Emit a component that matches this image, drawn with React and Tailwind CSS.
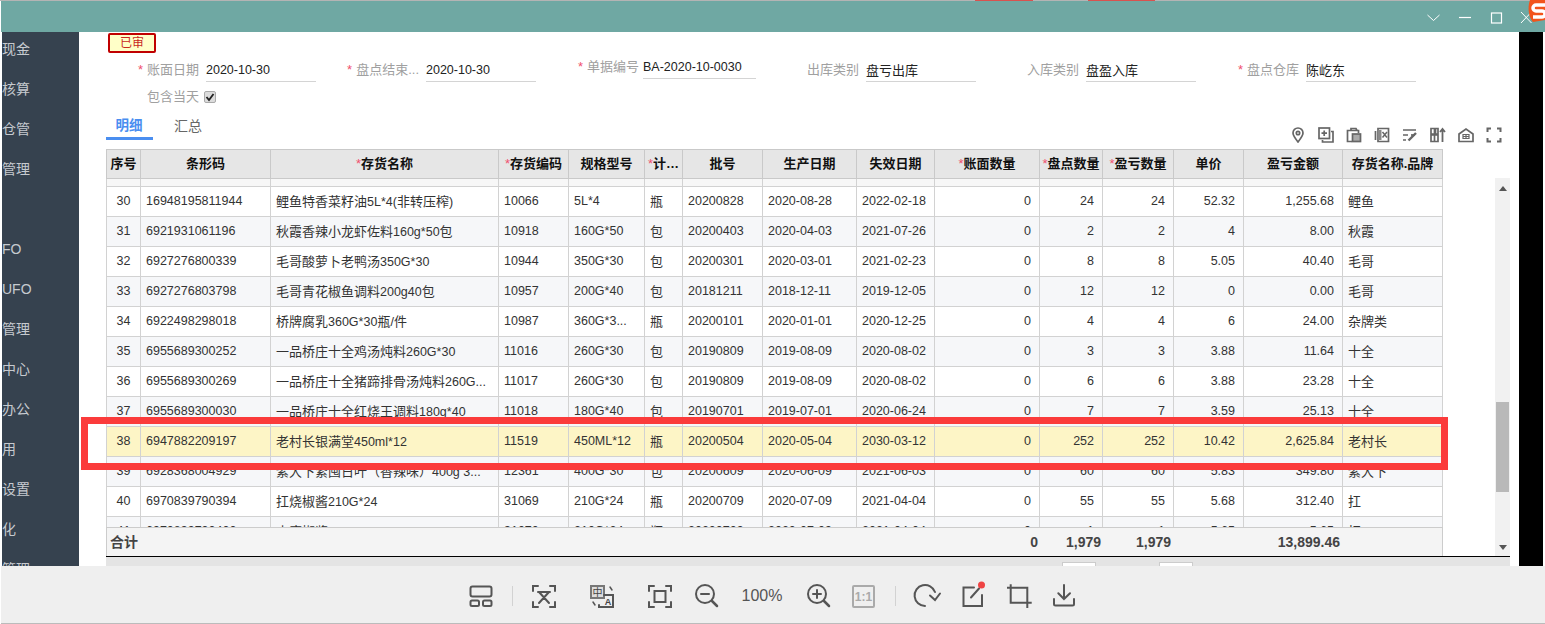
const menu = ["现金", "核算", "仓管", "管理", "", "FO", "UFO", "管理", "中心", "办公", "用", "设置", "化", "管理"]

const fields = [
  { label: "账面日期", value: "2020-10-30", star: true },
  { label: "盘点结束...", value: "2020-10-30", star: true },
  { label: "单据编号", value: "BA-2020-10-0030", star: true, raised: true },
  { label: "出库类别", value: "盘亏出库" },
  { label: "入库类别", value: "盘盈入库" },
  { label: "盘点仓库", value: "陈屹东", star: true },
]

const columns = [
  { title: "序号", width: "w-[35px]", align: "text-center" },
  { title: "条形码", width: "w-[130px]", align: "text-left" },
  { title: "存货名称", width: "w-[228px]", align: "text-left", star: true },
  { title: "存货编码", width: "w-[70px]", align: "text-left", star: true },
  { title: "规格型号", width: "w-[76px]", align: "text-left" },
  { title: "计…", width: "w-[38px]", align: "text-left", star: true },
  { title: "批号", width: "w-[80px]", align: "text-left" },
  { title: "生产日期", width: "w-[94px]", align: "text-left" },
  { title: "失效日期", width: "w-[78px]", align: "text-left" },
  { title: "账面数量", width: "w-[105px]", align: "text-right", star: true },
  { title: "盘点数量", width: "w-[63px]", align: "text-right", star: true },
  { title: "盈亏数量", width: "w-[71px]", align: "text-right", star: true },
  { title: "单价", width: "w-[70px]", align: "text-right" },
  { title: "盈亏金额", width: "w-[99px]", align: "text-right" },
  { title: "存货名称.品牌", width: "w-[100px]", align: "text-left" },
]

const rows = [
  ["30", "16948195811944", "鲤鱼特香菜籽油5L*4(非转压榨)", "10066", "5L*4", "瓶", "20200828", "2020-08-28", "2022-02-18", "0", "24", "24", "52.32", "1,255.68", "鲤鱼"],
  ["31", "6921931061196", "秋霞香辣小龙虾佐料160g*50包", "10918", "160G*50", "包", "20200403", "2020-04-03", "2021-07-26", "0", "2", "2", "4", "8.00", "秋霞"],
  ["32", "6927276800339", "毛哥酸萝卜老鸭汤350G*30", "10944", "350G*30", "包", "20200301", "2020-03-01", "2021-02-23", "0", "8", "8", "5.05", "40.40", "毛哥"],
  ["33", "6927276803798", "毛哥青花椒鱼调料200g40包", "10957", "200G*40", "包", "20181211", "2018-12-11", "2019-12-05", "0", "12", "12", "0", "0.00", "毛哥"],
  ["34", "6922498298018", "桥牌腐乳360G*30瓶/件", "10987", "360G*3...", "瓶", "20200101", "2020-01-01", "2020-12-25", "0", "4", "4", "6", "24.00", "杂牌类"],
  ["35", "6955689300252", "一品桥庄十全鸡汤炖料260G*30", "11016", "260G*30", "包", "20190809", "2019-08-09", "2020-08-02", "0", "3", "3", "3.88", "11.64", "十全"],
  ["36", "6955689300269", "一品桥庄十全猪蹄排骨汤炖料260G...", "11017", "260G*30", "包", "20190809", "2019-08-09", "2020-08-02", "0", "6", "6", "3.88", "23.28", "十全"],
  ["37", "6955689300030", "一品桥庄十全红烧王调料180g*40", "11018", "180G*40", "包", "20190701", "2019-07-01", "2020-06-24", "0", "7", "7", "3.59", "25.13", "十全"],
  ["38", "6947882209197", "老村长银满堂450ml*12", "11519", "450ML*12", "瓶", "20200504", "2020-05-04", "2030-03-12", "0", "252", "252", "10.42", "2,625.84", "老村长"],
  ["39", "6928368004929", "紫大下紧囤日叶（香辣味）400g 3...", "12361", "400G*30", "包", "20200609", "2020-06-09", "2021-06-03", "0", "60", "60", "5.83", "349.80", "紫大下"],
  ["40", "6970839790394", "扛烧椒酱210G*24", "31069", "210G*24", "瓶", "20200709", "2020-07-09", "2021-04-04", "0", "55", "55", "5.68", "312.40", "扛"],
  ["41", "6970839790400", "小磨椒酱210G*24", "31070", "210G*24", "瓶", "20200709", "2020-07-09", "2021-04-04", "0", "1", "1", "5.65", "5.65", "扛"],
]

// latin runs sit a little smaller than the chinese ones in the reference
function Mixed({ text }) {
  return text.split(/([\u4e00-\u9fff（）]+)/).map((part, i) =>
    i % 2 ? <span key={i} className="text-[13px]">{part}</span> : part
  )
}

function Colgroup() {
  return (
    <colgroup>
      {columns.map((c) => (
        <col key={c.title} className={c.width} />
      ))}
    </colgroup>
  )
}

function Star() {
  return <span className="text-[#f0506e] font-normal">*</span>
}

function TinyIcon({ children }) {
  return (
    <svg viewBox="0 0 16 16" className="w-4 h-4" fill="none" stroke="#666" strokeWidth="1.700">
      {children}
    </svg>
  )
}

function ToolIcon({ children, className = "", color = "#555" }) {
  return (
    <svg viewBox="0 0 26 26" className={`w-[26px] h-[26px] overflow-visible ${className}`} fill="none" stroke={color} strokeWidth="2" strokeLinecap="round">
      {children}
    </svg>
  )
}

function TableActions() {
  return (
    <div className="ml-auto mr-[17px] mt-[12px] flex gap-3 self-start">
      <TinyIcon>
        <path d="M8 15C4.500 10.500 3 8.200 3 6a5 5 0 0 1 10 0c0 2.200-1.500 4.500-5 9z" />
        <circle cx="8" cy="6" r="1.700" />
      </TinyIcon>
      <TinyIcon>
        <rect x="1" y="1" width="10.500" height="10.500" />
        <path d="M6.200 3.500v5.500M3.500 6.200H9M13 4.500h2V15H4.500v-2" />
      </TinyIcon>
      <TinyIcon>
        <path d="M5 3.500V1.500h5l1 2M6 14.500H1.500V3.500h11V6" />
        <rect x="6.500" y="7" width="8" height="7.500" fill="#aaa" />
      </TinyIcon>
      <TinyIcon>
        <path d="M4 1.500h10.500v13H4z" />
        <path d="M1.500 4v9" />
        <path d="M4 3h3.500v10H4z" fill="#888" stroke="none" />
        <path d="M8.500 5l4.500 5.500M13 5l-4.500 5.500" strokeWidth="1.500" />
      </TinyIcon>
      <TinyIcon>
        <path d="M1 3h13M1 8h5M1 13h3" />
        <path d="M6.500 13.500L14 6" strokeWidth="2.400" />
        <path d="M9 8h4" />
      </TinyIcon>
      <TinyIcon>
        <path d="M1 1.500h3.500v5.500H1zM1 8h7v6.500H1zM5.500 1.500H8V7H5.500zM4.500 8v6.500" />
        <path d="M12.500 15V2M10 5l2.500-3L15 5" strokeWidth="1.800" />
      </TinyIcon>
      <TinyIcon>
        <path d="M1 7l7-5 7 5v7.500H1z" />
        <path d="M5 7.500h6v4H5zM8 7.500v4M5 9.500h6" strokeWidth="1.200" />
      </TinyIcon>
      <TinyIcon>
        <path d="M1.500 5V1.500H5M11 1.500h3.500V5M14.500 11v3.500H11M5 14.500H1.500V11" strokeWidth="2" />
      </TinyIcon>
    </div>
  )
}

function Toolbar() {
  return (
    <div className="ml-[1px] h-[58px] pt-[3px] bg-[#efefef] border-b border-[#bbb] flex items-center">
      <ToolIcon className="ml-[467px]">
        <rect x="2.500" y="3.500" width="21" height="10" rx="2" />
        <rect x="2.500" y="17.500" width="8.500" height="5.500" rx="1.500" />
        <rect x="15" y="17.500" width="8.500" height="5.500" rx="1.500" />
      </ToolIcon>
      <div className="ml-[18px] w-px h-5 bg-[#d2d2d2]" />
      <ToolIcon className="ml-[18px]">
        <path d="M2 8V3h5M19 3h5v5M24 19v5h-5M7 24H2v-5" />
        <path d="M7 9h12M8 9l10 11M18 9L8 20" />
      </ToolIcon>
      <ToolIcon className="ml-[32px]" >
        <rect x="2" y="3" width="13" height="12" stroke="#777" fill="#ddd" />
        <text x="8.500" y="13" textAnchor="middle" fontSize="10" fill="#444" stroke="none">中</text>
        <path d="M15 12h9v12H10v-2" />
        <text x="19" y="22" textAnchor="middle" fontSize="9" fontWeight="700" fill="#444" stroke="none">A</text>
        <path d="M21 4l2 3M4 19l2 3" strokeWidth="1.500" />
      </ToolIcon>
      <ToolIcon className="ml-[32px]">
        <path d="M2 8V3h5M19 3h5v5M24 19v5h-5M7 24H2v-5" />
        <rect x="7.500" y="8" width="11" height="11" />
      </ToolIcon>
      <ToolIcon className="ml-[20px]">
        <circle cx="12" cy="11" r="9" />
        <path d="M19 18l5 5" strokeWidth="2.500" />
        <path d="M8 11h8" />
      </ToolIcon>
      <span className="ml-[22px] w-[42px] text-[16px] text-[#555] text-center whitespace-nowrap">100%</span>
      <ToolIcon className="ml-[22px]">
        <circle cx="12" cy="11" r="9" />
        <path d="M19 18l5 5" strokeWidth="2.500" />
        <path d="M8 11h8M12 7v8" />
      </ToolIcon>
      <ToolIcon className="ml-[20px]" color="#aaa">
        <rect x="2" y="3" width="21" height="21" rx="1" />
        <text x="12.500" y="17.500" textAnchor="middle" fontSize="12" fontWeight="700" fill="#aaa" stroke="none">1:1</text>
      </ToolIcon>
      <div className="ml-[18px] w-px h-5 bg-[#d2d2d2]" />
      <ToolIcon className="ml-[18px]">
        <path d="M11 23A10.500 10.500 0 1 1 21 9" />
        <path d="M16 12.500l5 4.500 5-6.500" />
      </ToolIcon>
      <ToolIcon className="ml-[20px]">
        <path d="M14 4.500H3.500V23h18.500V12" />
        <path d="M11 14.500l8-9" />
        <circle cx="21.500" cy="2" r="3.500" fill="#ef4444" stroke="none" />
      </ToolIcon>
      <ToolIcon className="ml-[20px]">
        <path d="M1 4.700h20.300V25M4.700 1.300v18.400H25.700" strokeLinecap="butt" />
      </ToolIcon>
      <ToolIcon className="ml-[19px]">
        <path d="M13 2v14M7.300 10.300L13 16l6-5.700" />
        <path d="M3 16v5a1.500 1.500 0 0 0 1.500 1.500h17a1.500 1.500 0 0 0 1.500-1.500v-5" />
      </ToolIcon>
    </div>
  )
}

function DataGrid() {
  return (
    <div className="ml-[27px] mt-[9px] w-[1404px] flex-1 min-h-0 flex flex-col">
      <div className="flex h-[407px]">
        <div className="w-[1337px] flex flex-col">
          <div className="h-[378px] overflow-hidden">
            <table className="table-fixed w-[1337px] border-separate border-spacing-0">
              <Colgroup />
              <thead>
                <tr>
                  {columns.map((c, i) => (
                    <th
                      key={c.title}
                      className={`h-[30px] p-0 pb-[1px] bg-[#e6e6e6] border-t border-b border-r border-[#c9c9c9] text-[13px] font-bold text-[#111] text-center whitespace-nowrap overflow-hidden ${i === 0 ? "border-l" : ""}`}
                    >
                      {c.star && <Star />}
                      {c.title}
                    </th>
                  ))}
                </tr>
                <tr>
                  {columns.map((c, i) => (
                    <th key={c.title} className={`h-[8px] p-0 bg-[#f7f7f7] border-b border-r border-[#d2d2d2] ${i === 0 ? "border-l" : ""}`} />
                  ))}
                </tr>
              </thead>
              <tbody>
                {rows.map((row) => {
                  const num = Number(row[0])
                  const bg = num === 38 ? "bg-[#fdf5c6]" : num % 2 ? "bg-[#f6f7f9]" : "bg-white"
                  return (
                    <tr key={row[0]} className={bg}>
                      {row.map((cell, i) => (
                        <td
                          key={i}
                          className={`h-[30px] py-0 border-b border-r border-[#d2d2d2] text-[12.5px] text-[#333] whitespace-nowrap overflow-hidden ${columns[i].align} ${i === 0 ? "border-l" : ""} ${columns[i].align === "text-right" ? "pl-[5px] pr-[8px]" : "px-[5px]"}`}
                        >
                          <Mixed text={cell} />
                        </td>
                      ))}
                    </tr>
                  )
                })}
              </tbody>
            </table>
          </div>
          <table className="table-fixed w-[1337px] border-separate border-spacing-0 h-[29px] bg-[#f4f4f4]">
            <Colgroup />
            <tbody>
              <tr className="text-[14px] font-bold text-[#444]">
                <td colSpan={9} className="pl-[3px] border-t border-l border-[#ccc]">合计</td>
                <td className="text-right pr-[2px] border-t border-[#ccc]">0</td>
                <td className="text-right pr-[2px] border-t border-[#ccc]">1,979</td>
                <td className="text-right pr-[3px] border-t border-[#ccc]">1,979</td>
                <td className="border-t border-[#ccc]" />
                <td className="text-right pr-[3px] border-t border-[#ccc]">13,899.46</td>
                <td className="border-t border-r border-[#ccc]" />
              </tr>
            </tbody>
          </table>
        </div>
        <div className="ml-auto mt-[29px] w-[15px] bg-[#f1f1f1] flex flex-col items-center">
          <div className="h-[20px] flex items-center justify-center">
            <div className="w-0 h-0 border-x-[4px] border-x-transparent border-b-[5px] border-b-[#555]" />
          </div>
          <div className="mt-[204px] h-[90px] w-[13px] bg-[#b9b9b9]" />
          <div className="mt-auto h-[17px] flex items-center justify-center">
            <div className="w-0 h-0 border-x-[4px] border-x-transparent border-t-[5px] border-t-[#555]" />
          </div>
        </div>
      </div>
      <div className="flex-1 bg-[#e4e4e4] border-t border-black overflow-hidden flex items-start pt-[5px]">
        <div className="ml-[956px] w-[34px] h-5 bg-white border border-[#ccc]" />
        <div className="ml-[63px] w-[34px] h-5 bg-white border border-[#ccc]" />
      </div>
    </div>
  )
}

export default function App() {
  return (
    <div className="relative w-[1545px] h-[624px] overflow-hidden bg-white flex flex-col font-['Liberation_Sans','Noto_Sans_CJK_SC',sans-serif]">
      {/* strip of the window behind */}
      <div className="h-[1px] bg-[#b4b4b4] flex">
        <div className="ml-[975px] w-[58px] bg-[#d9524f]" />
        <div className="ml-[55px] w-[67px] bg-[#d9524f]" />
      </div>
      <div className="ml-[1px] h-[31px] bg-[#6fa8a3] flex items-center justify-end">
        <svg viewBox="0 0 116 30" className="w-[116px] h-[30px] mr-[2px]" fill="none" stroke="#fff" strokeWidth="1">
          <path d="M0.500 13l6 5.500 6-5.500" />
          <path d="M32 15.500h12" strokeWidth="1.200" />
          <rect x="64.500" y="11" width="10" height="10" strokeWidth="1.200" />
          <path d="M94 10l10.500 11M104.500 10L94 21" />
        </svg>
      </div>
      <svg viewBox="0 0 18 22" className="absolute top-0 right-0 w-[18px] h-[22px]">
        <path d="M3 0h15v20l-12 2C2 18 0 8 3 0z" fill="#f2541b" />
        <path d="M18 5H9a3 3 0 0 0 0 6h6a3 3 0 0 1 0 6H6" fill="none" stroke="#fff" strokeWidth="3.500" />
      </svg>

      <div className="flex-1 min-h-0 flex">
        <div className="ml-[2px] w-[77px] bg-[#36424f] overflow-hidden">
          <ul className="-mt-[3px]">
            {menu.map((m, i) => (
              <li key={i} className="h-10 flex items-center text-[14px] text-[#c6cacf] whitespace-nowrap">{m}</li>
            ))}
          </ul>
        </div>

        <div className="flex-1 min-w-0 flex flex-col">
          <div className="ml-[29px] mt-[1px] w-[48px] h-[20px] border-2 border-[#c00000] rounded-[2px] bg-[#ffffc8] text-[#c8281e] text-[12px] flex items-center justify-center">已审</div>

          <div className="mt-[7px] h-[22px] pl-[20px] flex">
            {fields.map((f) => (
              <div key={f.label} className={`w-[220px] flex h-[22px] ${f.raised ? "-mt-[3px]" : ""}`}>
                <div className="w-[100px] leading-[20px] text-right text-[13px] text-[#a0a0a0] whitespace-nowrap">
                  {f.star && <span className="text-[#f0506e] mr-[4px]">*</span>}
                  {f.label}
                </div>
                <div className={`h-[22px] border-b border-[#d4d4d4] text-[#222] leading-[21px] text-[12.5px] whitespace-nowrap ${f.raised ? "ml-[4px] w-[113px]" : "ml-[7px] w-[110px]"}`}>
                  <Mixed text={f.value} />
                </div>
              </div>
            ))}
          </div>

          <div className="mt-[6px] h-[18px] pl-[20px] flex items-center">
            <div className="w-[100px] text-right text-[13px] text-[#a0a0a0]">包含当天</div>
            <div className="ml-[5px] w-[12px] h-[12px] rounded-[2px] bg-[#dcdcdc] border border-[#aaa] flex items-center justify-center">
              <svg viewBox="0 0 10 10" className="w-[10px] h-[10px]" fill="none" stroke="#222" strokeWidth="1.800">
                <path d="M1.500 5l2.500 3 4.500-6" />
              </svg>
            </div>
          </div>

          <div className="mt-[9px] h-[25px] flex">
            <div className="ml-[27px] w-[47px] pr-[1px] border-b-[3px] border-[#4a8ef0] text-center text-[13.5px] font-bold text-[#4a8ef0] leading-[22px]">明细</div>
            <div className="ml-[21px] text-[14px] text-[#666] leading-[22px]">汇总</div>
            <TableActions />
          </div>

          <DataGrid />
        </div>

        <div className="w-[24px] bg-black" />
        <div className="w-[2px]" />
      </div>

      <Toolbar />

      {/* red marker drawn over the screenshot */}
      <div className="absolute left-[81px] top-[417px] w-[1367px] h-[53px] border-[7px] border-[#fb3b3b] pointer-events-none" />
    </div>
  )
}
